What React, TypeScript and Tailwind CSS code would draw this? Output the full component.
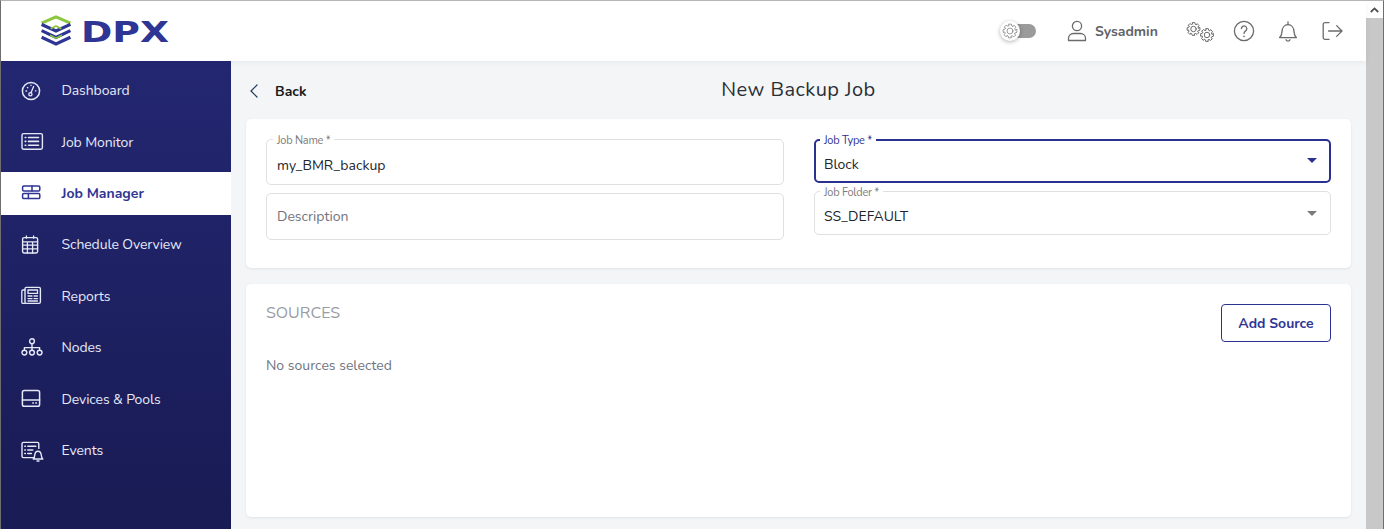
import React from 'react';
import { ChevronLeft } from 'lucide-react';

const font = 'font-["Nunito","Lato","Noto_Sans",sans-serif]';

const Icon = ({ children, size = 24, vb = 24 }: { children: React.ReactNode; size?: number; vb?: number }) => (
  <svg width={size} height={size} viewBox={`0 0 ${vb} ${vb}`} fill="none" stroke="currentColor" strokeWidth="1.3" strokeLinecap="round" strokeLinejoin="round">
    {children}
  </svg>
);

// outline cog: eight teeth plus a hole in the middle
const Gear = ({ cx, cy, r }: { cx: number; cy: number; r: number }) => {
  const pts: string[] = [];
  for (let i = 0; i < 8; i++) {
    const a = (i * Math.PI) / 4;
    const at = (off: number, rad: number) => {
      const t = a + off;
      return `${(cx + Math.cos(t) * rad).toFixed(2)},${(cy + Math.sin(t) * rad).toFixed(2)}`;
    };
    pts.push(at(-0.2, r), at(0.2, r), at(0.36, r * 0.76), at(0.6, r * 0.76));
  }
  return (
    <g strokeWidth="1">
      <polygon points={pts.join(' ')} />
      <circle cx={cx} cy={cy} r={r * 0.42} />
    </g>
  );
};

const navItems: { label: string; icon: React.ReactNode; active?: boolean }[] = [
  {
    label: 'Dashboard',
    icon: (
      <Icon>
        <circle cx="10" cy="12" r="8.6" strokeWidth="1.5" />
        <circle cx="9.4" cy="15.2" r="1.6" />
        <path d="M10 13.8 L12.6 7.4" />
        <path d="M5 12h.6M6.4 8.4l.4.4M10 6.2v.4M14.4 11.8h.6" />
      </Icon>
    ),
  },
  {
    label: 'Job Monitor',
    icon: (
      <Icon>
        <rect x="1" y="3.6" width="20.4" height="15.6" rx="1.6" strokeWidth="1.4" />
        <path d="M7.5 7.5h10M7.5 11.4h10M7.5 15.2h10" strokeWidth="1.6" />
        <path d="M4.2 7.5h.6M4.2 11.4h.6M4.2 15.2h.6" strokeWidth="1.6" />
      </Icon>
    ),
  },
  {
    label: 'Job Manager',
    active: true,
    icon: (
      <Icon>
        <rect x="1.6" y="5" width="17.2" height="5" rx="1.2" strokeWidth="1.5" />
        <rect x="1.6" y="12.6" width="17.2" height="5" rx="1.2" strokeWidth="1.5" />
        <path d="M11 5v5M7.4 12.6v5" strokeWidth="1.5" />
      </Icon>
    ),
  },
  {
    label: 'Schedule Overview',
    icon: (
      <Icon>
        <rect x="1.6" y="4.6" width="15" height="15.4" rx="1.4" strokeWidth="1.4" />
        <path d="M1.6 8.8h15M1.6 12.2h15M1.6 15.8h15M6.4 8.8v11.2M11.6 8.8v11.2M5.4 2.8v2.4M12.6 2.8v2.4" />
      </Icon>
    ),
  },
  {
    label: 'Reports',
    icon: (
      <Icon>
        <rect x="4" y="3.4" width="15.4" height="16" rx="1.4" strokeWidth="1.4" />
        <path d="M4 6H2a1.2 1.2 0 0 0-1.2 1.2v11A1.2 1.2 0 0 0 2 19.4h2" />
        <rect x="7" y="6" width="9.5" height="3.4" />
        <path d="M7 12h4M13 12h3.5M7 14.6h4M13 14.6h3.5M7 17h9.5" />
      </Icon>
    ),
  },
  {
    label: 'Nodes',
    icon: (
      <Icon>
        <circle cx="11" cy="5.2" r="2.4" strokeWidth="1.4" />
        <circle cx="3.4" cy="16.6" r="2.4" strokeWidth="1.4" />
        <circle cx="11" cy="16.6" r="2.4" strokeWidth="1.4" />
        <circle cx="18.6" cy="16.6" r="2.4" strokeWidth="1.4" />
        <path d="M11 7.6v6.6M3.4 14.2v-2.6h15.2v2.6" strokeWidth="1.4" />
      </Icon>
    ),
  },
  {
    label: 'Devices & Pools',
    icon: (
      <Icon>
        <rect x="1.4" y="3.6" width="17.2" height="15.6" rx="1.8" strokeWidth="1.5" />
        <path d="M1.4 13h17.2" strokeWidth="1.5" />
        <path d="M11.8 16h.6M14.8 16h.6" strokeWidth="1.5" />
      </Icon>
    ),
  },
  {
    label: 'Events',
    icon: (
      <Icon>
        <path d="M13 18.6H2.4A1.4 1.4 0 0 1 1 17.2V4.8a1.4 1.4 0 0 1 1.4-1.4h14A1.4 1.4 0 0 1 17.8 4.8v4.6" strokeWidth="1.4" />
        <path d="M3.8 7.2h.6M3.8 11h.6M3.8 14.6h.6M6.8 7.2h8M6.8 11h5M6.8 14.6h3.6" strokeWidth="1.5" />
        <path d="M12.2 20c1.2-1 1.4-2.4 1.6-4.2.2-2 1.6-3.6 3.2-3.6s3 1.6 3.2 3.6c.2 1.8.4 3.2 1.6 4.2Z" strokeWidth="1.4" />
        <path d="M16 22h2" strokeWidth="1.4" />
      </Icon>
    ),
  },
];

const Field = ({ label, value, focused, select, className }: { label?: string; value: string; focused?: boolean; select?: boolean; className: string }) => (
  <div className={`relative rounded-[5px] flex items-center ${focused ? 'border-2 border-[#2b3190] pl-[8px]' : 'border border-[#dfe0e2]'} ${select && !focused ? 'pl-[9px]' : ''} ${!select ? 'pl-[10px]' : ''} ${className}`}>
    {label && (
      <span className={`absolute bg-white px-[4px] text-[11px] tracking-[-0.25px] leading-[12px] ${focused ? 'left-[4px] top-[-6px] text-[#2b3190]' : select ? 'left-[5px] top-[-5px] text-[#7b7b7b]' : 'left-[6px] top-[-5px] text-[#7b7b7b]'}`}>{label}</span>
    )}
    <span className={`${label ? 'text-[#20242a] mt-[8px]' : 'text-[#6f7480]'} text-[14px] leading-[20px]`}>{value}</span>
    {select && (
      <span className={`absolute w-0 h-0 border-l-[5px] border-r-[5px] border-t-[5px] border-l-transparent border-r-transparent ${focused ? 'right-[12px] top-[17px] border-t-[#2b3190]' : 'right-[13px] top-[19px] border-t-[#7a7a7a]'}`} />
    )}
  </div>
);

export default function App() {
  return (
    <div className={`${font} w-[1384px] h-[529px] overflow-hidden flex bg-[#f4f5f7] border-t border-t-[#b5b5b5] border-l border-l-[#6e6e6e] border-r border-r-[#6e6e6e]`}>
      <div className="w-[1365px] h-full flex flex-col">
        {/* top bar */}
        <header className="h-[60px] shrink-0 bg-white flex items-center shadow-[0_1px_6px_rgba(0,0,0,0.06)] z-10">
          <div className="ml-[40px] flex items-center">
            <svg width="128" height="36" viewBox="0 0 128 36" fill="none">
              <path d="M0.6 10.2 L15 3.8 L29.4 10.2" stroke="#8cc63f" strokeWidth="3" />
              <path d="M0.6 11.4 L15 18 L29.4 11.4" stroke="#2e3594" strokeWidth="3.2" />
              <path d="M9.6 15.8 L15 13 L20.4 15.8" stroke="#8cc63f" strokeWidth="1.8" />
              <path d="M0.6 17.6 L15 24.4 L29.4 17.6" stroke="#2e3594" strokeWidth="3.2" />
              <path d="M9 22.2 L15 25.2 L21 22.2" stroke="#8cc63f" strokeWidth="1.6" />
              <path d="M0.6 24.2 L15 31 L29.4 24.2" stroke="#2e3594" strokeWidth="3.2" />
              <text x="40" y="29" fontFamily="DejaVu Sans" fontWeight="700" fontSize="29" fill="#2e3594" textLength="88" lengthAdjust="spacingAndGlyphs">DPX</text>
            </svg>
          </div>
          <div className="ml-auto flex items-center text-[#6b6b6b]">
            {/* theme toggle */}
            <div className="relative w-[28px] h-[14px] rounded-full bg-[#9b9b9b] mr-[29.5px]">
              <div className="absolute left-[-8px] top-[-3px] w-[20px] h-[20px] rounded-full bg-white shadow-[0_1px_4px_rgba(0,0,0,0.3)] flex items-center justify-center">
                <Icon size={16}>
                  <Gear cx={12} cy={12} r={10.5} />
                </Icon>
              </div>
            </div>
            <svg width="22" height="24" viewBox="0 0 22 24" fill="none" stroke="currentColor" strokeWidth="1.3">
              <circle cx="11" cy="7" r="4.6" />
              <path d="M2.5 21.5v-2.2c0-2.8 2.2-4.8 5-4.8h7c2.8 0 5 2 5 4.8v2.2Z" strokeLinejoin="round" />
            </svg>
            <span className="ml-[7.5px] text-[14px] font-bold text-[#5f6368] w-[63px]">Sysadmin</span>
            <div className="ml-[28px]">
              <Icon size={28} vb={28}>
                <Gear cx={7.5} cy={12} r={6.5} />
                <Gear cx={21} cy={18} r={6.5} />
              </Icon>
            </div>
            <div className="ml-[18px]">
              <Icon size={24}>
                <circle cx="12" cy="12" r="9.6" />
                <path d="M9.4 9.6a2.7 2.7 0 1 1 4.2 2.3c-1 .7-1.6 1.2-1.6 2.5" />
                <path d="M12 17.2v.2" strokeWidth="1.6" />
              </Icon>
            </div>
            <div className="ml-[20px]">
              <Icon size={24}>
                <path d="M3.6 18.6c1.8-1.6 2.2-3 2.4-6 .2-4 2.6-7 6-7s5.8 3 6 7c.2 3 .6 4.4 2.4 6Z" />
                <path d="M12 3v2.4M10 20.8a2.2 2.2 0 0 0 4 0" />
              </Icon>
            </div>
            <div className="ml-[20px] mr-[22px]">
              <Icon size={24}>
                <path d="M9 3.6H5A1.8 1.8 0 0 0 3.2 5.4v13.2A1.8 1.8 0 0 0 5 20.4h4" />
                <path d="M8.6 12h13M16.6 6.6l5.4 5.4-5.4 5.4" />
              </Icon>
            </div>
          </div>
        </header>

        <div className="flex-1 flex min-h-0">
          {/* sidebar */}
          <nav className="w-[230px] shrink-0 bg-gradient-to-b from-[#232771] to-[#191b54] flex flex-col gap-[8.43px] pt-[8.1px]">
            {navItems.map((item) => (
              <div key={item.label} className={`h-[43px] shrink-0 flex items-center pl-[20px] text-[14px] ${item.active ? 'bg-white text-[#2e3594] font-bold' : 'text-[#e6e9f8] tracking-[-0.1px]'}`}>
                <span className="w-[40.5px] shrink-0">{item.icon}</span>
                <span>{item.label}</span>
              </div>
            ))}
          </nav>

          {/* content */}
          <main className="flex-1 px-[15px] min-w-0">
            <div className="h-[58px] grid grid-cols-[1fr_auto_1fr] items-center">
              <div className="flex items-center">
                <ChevronLeft size={24} strokeWidth={1.2} className="text-[#1d3a5f] -ml-[4.5px] mt-[2px]" />
                <span className="ml-[9.5px] text-[14px] font-bold text-[#17191d] mt-[3px]">Back</span>
              </div>
              <h1 className="text-[20px] text-[#2b2f36] tracking-[0.45px]">New Backup Job</h1>
              <div />
            </div>

            <section className="h-[149px] bg-white rounded-[5px] shadow-[0_1px_3px_rgba(0,0,0,0.08)] px-[20px] pt-[20px] flex gap-[30px]">
              <div className="w-[518px] flex flex-col gap-[8px]">
                <Field label="Job Name *" value="my_BMR_backup" className="h-[46px]" />
                <Field value="Description" className="h-[47px]" />
              </div>
              <div className="flex-1 flex flex-col gap-[8px]">
                <Field label="Job Type *" value="Block" focused select className="h-[44px]" />
                <Field label="Job Folder *" value="SS_DEFAULT" select className="h-[44px]" />
              </div>
            </section>

            <section className="mt-[16px] h-[233px] bg-white rounded-[5px] shadow-[0_1px_3px_rgba(0,0,0,0.08)] px-[20px] pt-[20px]">
              <div className="flex justify-between items-start">
                <h2 className="text-[16px] text-[#9a9da3] leading-[18px]">SOURCES</h2>
                <button className="w-[110px] h-[38px] border border-[#2b3190] rounded-[4px] text-[14px] font-bold text-[#2e3594] bg-white">Add Source</button>
              </div>
              <p className="mt-[14px] text-[14px] leading-[20px] text-[#6f7480]">No sources selected</p>
            </section>
          </main>
        </div>
      </div>

      {/* browser scrollbar */}
      <div className="w-[17px] shrink-0 h-full flex flex-col bg-[#f1f1f1]">
        <div className="h-[17px] shrink-0 bg-white flex items-center justify-center">
          <svg width="9" height="6" viewBox="0 0 9 6" fill="none" stroke="#505050" strokeWidth="1.8"><path d="M0.8 5 L4.5 1.4 L8.2 5" /></svg>
        </div>
        <div className="flex-1 bg-[#c8c8c8]" />
      </div>
    </div>
  );
}
